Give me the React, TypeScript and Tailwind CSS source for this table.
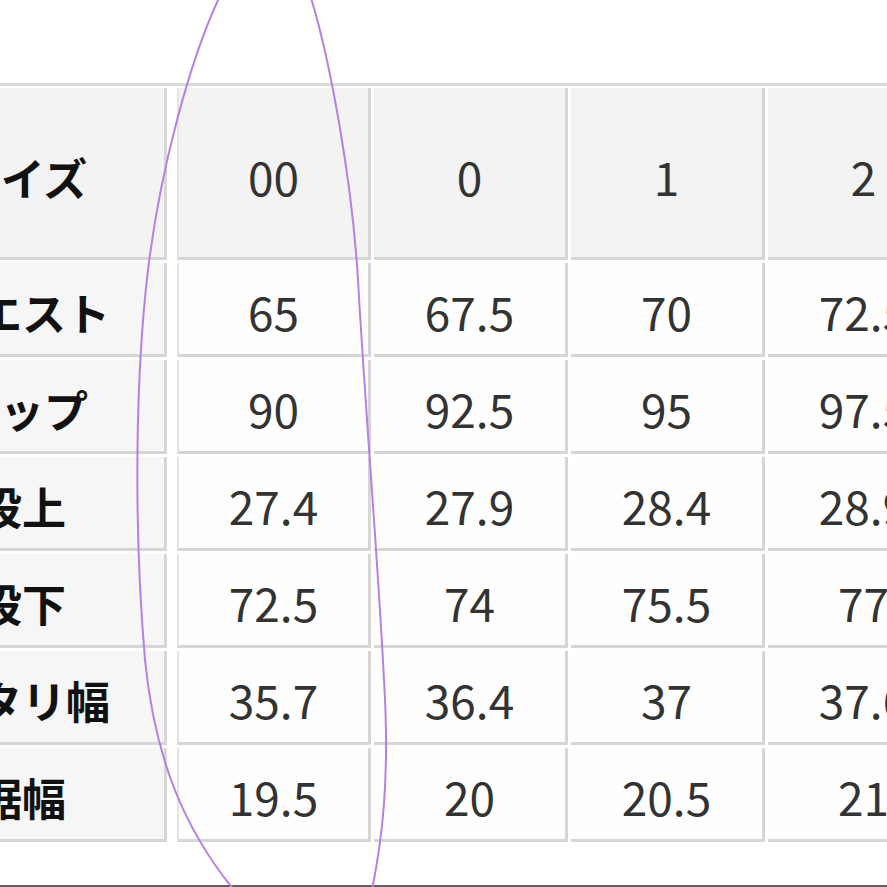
const HEAD = ["サイズ", "00", "0", "1", "2"];

const ROWS = [
  ["ウエスト", "65", "67.5", "70", "72.5"],
  ["ヒップ", "90", "92.5", "95", "97.5"],
  ["股上", "27.4", "27.9", "28.4", "28.9"],
  ["股下", "72.5", "74", "75.5", "77"],
  ["ワタリ幅", "35.7", "36.4", "37", "37.6"],
  ["裾幅", "19.5", "20", "20.5", "21"],
];

const font = "font-['Noto_Sans_CJK_JP','Noto_Sans',sans-serif]";

export default function App() {
  return (
    <div className={`relative w-[887px] h-[887px] overflow-hidden bg-white ${font}`}>
      <div className="h-[83px]" />
      <div className="h-[3px] bg-[#d9d9d9]" />
      <div className="h-[2px]" />

      <div className="ml-[-120px] grid grid-cols-[297px_197px_197px_197px_197px] gap-y-[3px]">
        {HEAD.map((h, i) => (
          <div
            key={h}
            className={`h-[172px] flex items-center justify-center bg-[#f3f3f3] border-r-[3px] border-b-[3px] border-[#d6d6d6] pt-[8px]
              ${i === 0 ? "mr-[10px] font-bold text-[44px] text-[#111]" : "mr-[3px] text-[46px] text-[#333]"}
              ${i === 1 ? "border-l-[2px] border-l-[#e4e4e4]" : ""}`}
          >
            {h}
          </div>
        ))}

        {ROWS.map((row) =>
          row.map((cell, i) => (
            <div
              key={row[0] + i}
              className={`h-[94px] flex items-center justify-center border-r-[3px] border-b-[3px] border-[#d6d6d6] pt-[6px]
                ${i === 0 ? "mr-[10px] bg-[#f6f6f6] font-bold text-[44px] text-[#111]" : "mr-[3px] bg-[#fefefe] text-[46px] text-[#333]"}
                ${i === 1 ? "border-l-[2px] border-l-[#e4e4e4]" : ""}`}
            >
              {cell}
            </div>
          ))
        )}
      </div>

      <div className="absolute left-0 right-0 bottom-0 h-[2px] bg-[#5f5f5f]" />

      {/* hand-drawn circle around the 00 column */}
      <svg className="absolute inset-0 pointer-events-none" width="887" height="887" viewBox="0 0 887 887" fill="none">
        <path
          d="M219 -2 C190 60 160 170 148 270 C136 370 133 520 145 660 C155 760 185 830 234 890"
          stroke="#b77fe6"
          strokeWidth="2"
        />
        <path
          d="M311 -2 C330 60 352 180 358 280 C366 420 378 560 384 680 C390 780 382 840 372 890"
          stroke="#b77fe6"
          strokeWidth="2"
        />
      </svg>
    </div>
  );
}
